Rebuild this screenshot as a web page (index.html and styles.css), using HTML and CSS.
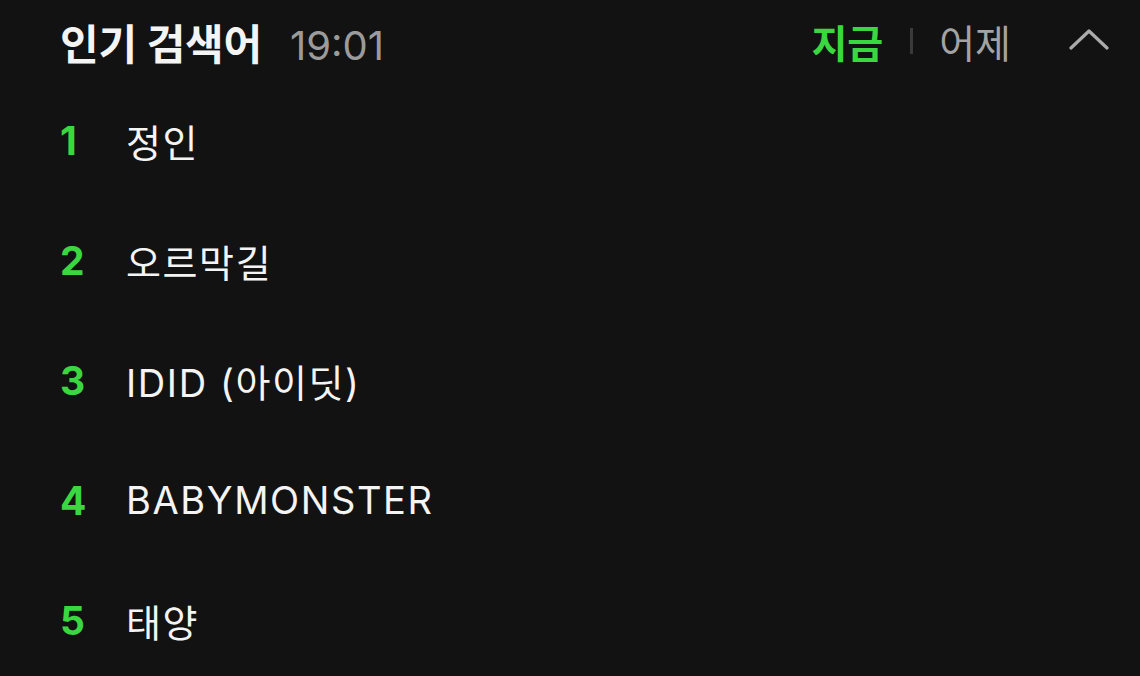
FILE: index.html
```html
<!DOCTYPE html>
<html lang="ko">
<head>
<meta charset="utf-8">
<title>인기 검색어</title>
<link rel="stylesheet" href="styles.css">
</head>
<body>
<section class="panel">
  <header class="head">
    <div class="head-left">
      <h1 class="title">인기 검색어</h1>
      <span class="time">19:01</span>
    </div>
    <div class="head-right">
      <span class="tab tab-on">지금</span>
      <span class="sep"></span>
      <span class="tab">어제</span>
      <svg class="chev" width="40" height="22" viewBox="0 0 40 22" aria-hidden="true">
        <polyline points="2,20 20,3 38,20" fill="none" stroke="#ababab" stroke-width="3.2" stroke-linecap="round" stroke-linejoin="round"/>
      </svg>
    </div>
  </header>
  <ol class="list">
    <li class="item"><span class="rank">1</span><span class="kw">정인</span></li>
    <li class="item"><span class="rank">2</span><span class="kw">오르막길</span></li>
    <li class="item"><span class="rank">3</span><span class="kw">IDID (아이딧)</span></li>
    <li class="item"><span class="rank">4</span><span class="kw">BABYMONSTER</span></li>
    <li class="item"><span class="rank">5</span><span class="kw">태양</span></li>
  </ol>
</section>
</body>
</html>
```

FILE: styles.css
```css
html, body {
  margin: 0;
  padding: 0;
  background: #121212;
}
* {
  box-sizing: border-box;
}
body {
  font-family: Inter, "Noto Sans CJK KR", "Noto Sans", sans-serif;
  color: #f2f2f2;
  width: 1140px;
  height: 676px;
  overflow: hidden;
}
.panel {
  display: flex;
  flex-direction: column;
}
.head {
  height: 80px;
  padding: 2px 31px 0 60px;
  display: flex;
  align-items: center;
  justify-content: space-between;
}
.head-left {
  display: flex;
  align-items: baseline;
  gap: 28px;
}
.title {
  margin: 0;
  font-size: 42px;
  font-weight: 700;
  color: #f4f4f4;
  letter-spacing: -0.2px;
}
.time {
  font-size: 40px;
  font-weight: 400;
  color: #9b9b9b;
}
.head-right {
  display: flex;
  align-items: center;
}
.tab {
  font-size: 39px;
  color: #a3a3a3;
  font-weight: 400;
}
.tab-on {
  color: #3bd740;
  font-weight: 700;
}
.sep {
  width: 3px;
  height: 26px;
  background: #3a3a3a;
  margin: 0 26px 0 27px;
}
.chev {
  margin-left: 58px;
  display: block;
  margin-top: -4px;
}
.list {
  list-style: none;
  margin: 0;
  padding: 0 0 0 60px;
}
.item {
  height: 120px;
  display: flex;
  align-items: center;
}
.rank {
  width: 66px;
  font-size: 39px;
  font-weight: 700;
  color: #3bd740;
}
.kw {
  font-size: 38px;
  font-weight: 400;
  color: #f4f4f4;
  letter-spacing: 1.6px;
}
```
